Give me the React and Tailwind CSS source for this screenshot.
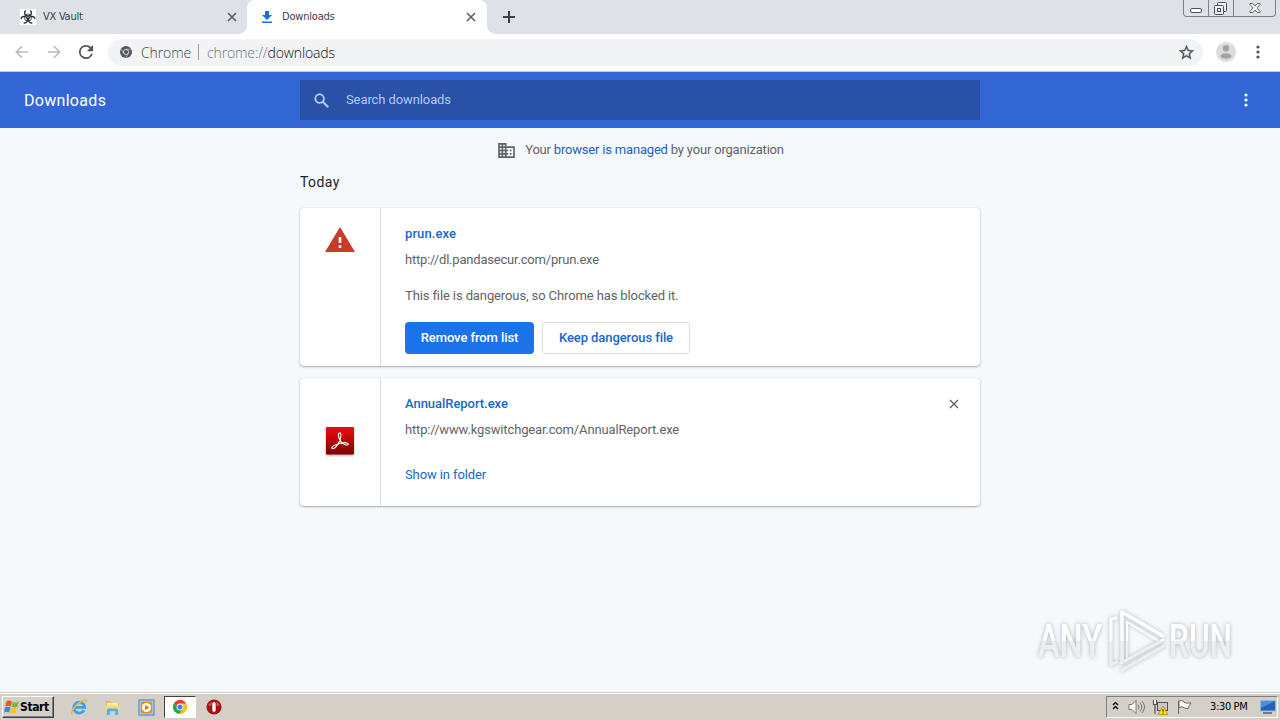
// App.jsx
import React from "react";

const TAB_FONT = "font-['DejaVu_Sans_Condensed','DejaVu_Sans',sans-serif]";

/* ================== ICONS ================== */
const CloseIcon = ({ className, width = 1.6 }) => (
  <svg viewBox="0 0 10 10" className={className} fill="none" stroke="currentColor" strokeWidth={width}>
    <path d="M1 1l8 8M9 1L1 9" />
  </svg>
);

const DotsIcon = ({ className }) => (
  <svg viewBox="0 0 4 14" className={className} fill="currentColor">
    <circle cx="2" cy="2" r="1.6" />
    <circle cx="2" cy="7" r="1.6" />
    <circle cx="2" cy="12" r="1.6" />
  </svg>
);

const BiohazardIcon = () => (
  <svg viewBox="0 0 16 16" className="w-4 h-4 bg-white" fill="none" stroke="#2b2b2b">
    <path d="M5.600 1.500C3.600 3.500 4.600 7 8 7s4.400-3.500 2.400-5.500" strokeWidth="1.400" />
    <path d="M1 9.800c.6-2.600 4.300-3.500 6-.6 1.700 3-.8 5.300-3.300 4.700" strokeWidth="1.400" />
    <path d="M15 9.800c-.6-2.600-4.300-3.500-6-.6-1.700 3 .8 5.300 3.300 4.700" strokeWidth="1.400" />
    <circle cx="8" cy="8.600" r="3.600" strokeWidth="0.800" />
    <circle cx="8" cy="8.400" r="1.500" fill="#2b2b2b" stroke="none" />
    <circle cx="8" cy="8.400" r="0.600" fill="#fff" stroke="none" />
  </svg>
);

const BackIcon = ({ className }) => (
  <svg viewBox="0 0 16 16" className={className} fill="none" stroke="#b9babc" strokeWidth="1.8">
    <path d="M15 8H2M8 1.5L1.5 8 8 14.5" />
  </svg>
);

const ReloadIcon = () => (
  <svg viewBox="4 4 16 16" className="w-[14px] h-[14px]" fill="#4f5256">
    <path d="M17.65 6.35A7.96 7.96 0 0 0 12 4a8 8 0 1 0 7.73 10h-2.08A6 6 0 1 1 12 6c1.66 0 3.14.69 4.22 1.78L13 11h7V4z" />
  </svg>
);

const ChromeMono = () => (
  <svg viewBox="0 0 24 24" className="w-3 h-3">
    <circle cx="12" cy="12" r="12" fill="#55585c" />
    <circle cx="12" cy="12" r="5.2" fill="#55585c" stroke="#f1f3f4" strokeWidth="1.5" />
    <path d="M12 6.5h11M7.2 14.8L2 6M16.8 14.8L11.5 24" stroke="#f1f3f4" strokeWidth="1" />
  </svg>
);

const StarIcon = () => (
  <svg viewBox="2 2 20 20" className="w-[15px] h-[15px]" fill="#4f5256" stroke="#4f5256" strokeWidth="0.4">
    <path d="M22 9.24l-7.19-.62L12 2 9.19 8.63 2 9.24l5.46 4.73L5.82 21 12 17.27 18.18 21l-1.63-7.03L22 9.24zM12 15.4l-3.76 2.27 1-4.28-3.32-2.88 4.38-.38L12 6.1l1.71 4.04 4.38.38-3.32 2.88 1 4.28L12 15.4z" />
  </svg>
);

const ChromeColor = () => (
  <svg viewBox="0 0 24 24" className="w-[14px] h-[14px]">
    <circle cx="12" cy="12" r="12" fill="#fbc11a" />
    <path d="M12 12L1.6 6A12 12 0 0 1 22.4 6z" fill="#e23c2e" />
    <path d="M1.6 6A12 12 0 0 0 11 24l6-9-5-3z" fill="#2ba24c" />
    <path d="M12 6h10.4A12 12 0 0 1 11 24l6-9z" fill="#fbc11a" />
    <circle cx="12" cy="12" r="5.8" fill="#fff" />
    <circle cx="12" cy="12" r="4.4" fill="#3f7fe8" />
  </svg>
);

const BusinessIcon = () => (
  <svg viewBox="2 3 20 18" className="w-[17px] h-[15px]" fill="#5f6368">
    <path d="M12 7V3H2v18h20V7H12zM6 19H4v-2h2v2zm0-4H4v-2h2v2zm0-4H4V9h2v2zm0-4H4V5h2v2zm4 12H8v-2h2v2zm0-4H8v-2h2v2zm0-4H8V9h2v2zm0-4H8V5h2v2zm10 12h-8v-2h2v-2h-2v-2h2v-2h-2V9h8v10zm-2-8h-2v2h2v-2zm0 4h-2v2h2v-2z" />
  </svg>
);

const WarningIcon = () => (
  <svg viewBox="0 0 30 25" className="w-[30px] h-[25px]">
    <path d="M15 0l15 25H0z" fill="#c93a28" />
    <path d="M13.700 10h2.600v6h-2.600zM13.700 18.300h2.600v2.700h-2.600z" fill="#fff" />
  </svg>
);

const PdfIcon = () => (
  <svg viewBox="0 0 30 30" className="w-[30px] h-[30px] drop-shadow-[0_1px_1px_rgba(0,0,0,0.35)]">
    <defs>
      <linearGradient id="pdf" x1="0" y1="0" x2="0" y2="1">
        <stop offset="0" stopColor="#f00b0b" />
        <stop offset="1" stopColor="#7d0303" />
      </linearGradient>
    </defs>
    <rect x="1" y="1" width="28" height="27.5" rx="1" fill="url(#pdf)" />
    <path
      d="M14.400 7c1.800-.6 2 2.700.8 6.200-1.500 4-4.500 9-7.200 9.500-2.300.2-1.500-2.200 2.300-3.800 4.200-1.700 9.700-3 12.200-1.600 1.600 1.100 0 2.300-2.300 1.400-3.200-1.300-5.700-4.200-6.500-7.500-.6-2.200-.3-3.900.7-4.200z"
      fill="none"
      stroke="#fff"
      strokeWidth="1.100"
    />
  </svg>
);

/* ================== BROWSER CHROME ================== */
const WindowButtons = () => (
  <div className="ml-auto mr-[4px] flex h-[17px] rounded-b-[4px] border border-t-0 border-[#7b8190] text-[#4b5060]">
    <div className="w-[25px] flex items-end justify-center border-r border-[#7b8190] pb-[3px]">
      <div className="w-3 h-[5px] rounded-[2px] border border-current bg-white" />
    </div>
    <div className="w-[25px] flex items-center justify-center border-r border-[#7b8190]">
      <svg viewBox="0 0 13 13" className="w-[13px] h-[13px] -ml-px" fill="#eceef1" stroke="currentColor">
        <rect x="3.500" y="0.500" width="9" height="9" rx="1" />
        <rect x="0.500" y="3.500" width="9" height="9" rx="1" />
        <rect x="3.500" y="6.500" width="3" height="3" />
      </svg>
    </div>
    <div className="w-[41px] flex items-center justify-center">
      <svg viewBox="0 0 13 11" className="w-[12px] h-[10px]" fill="#fff" stroke="currentColor">
        <path d="M1 .5h3l2.500 2.800L9 .5h3v1.200L8.500 5.500 12 9.300v1.200H9L6.500 7.700 4 10.500H1V9.300l3.500-3.800L1 1.700z" />
      </svg>
    </div>
  </div>
);

const TabStrip = () => (
  <div className={`h-[34px] flex bg-[#dee1e6] text-[11px] text-[#3c4043] ${TAB_FONT}`}>
    <div className="w-[247px] flex items-center pl-5 pr-[10px] rounded-br-lg bg-[#dee1e6]">
      <BiohazardIcon />
      <span className="ml-[7px] tracking-[-0.25px]">VX Vault</span>
      <CloseIcon className="ml-auto w-[10px] h-[10px] text-[#5a5d61]" />
    </div>
    <div className="relative w-[240px] flex items-center pl-[14px] pr-[11px] rounded-t-lg bg-white">
      {/* feet of the active tab */}
      <div className="absolute -left-2 bottom-0 w-2 h-2 bg-[radial-gradient(circle_at_0_0,#dee1e6_7.500px,#fff_8px)]" />
      <div className="absolute -right-2 bottom-0 w-2 h-2 bg-[radial-gradient(circle_at_100%_0,#dee1e6_7.500px,#fff_8px)]" />
      <svg viewBox="0 0 12 12" className="w-3 h-3" fill="#1a6fd8">
        <path d="M4 0h4v4h3L6 9 1 4h3zM1 10.500h10V12H1z" />
      </svg>
      <span className="ml-[9px] tracking-[-0.2px]">Downloads</span>
      <CloseIcon className="ml-auto w-[10px] h-[10px] text-[#5a5d61]" />
    </div>
    <svg viewBox="0 0 12 12" className="ml-4 mt-[11px] w-3 h-3" stroke="#3c4043" strokeWidth="2">
      <path d="M6 0v12M0 6h12" />
    </svg>
    <WindowButtons />
  </div>
);

const Toolbar = () => (
  <div className="h-[38px] flex items-center pl-[15px] pb-px bg-white border-b border-[#c3cbe0]">
    <BackIcon className="w-[14px] h-[14px]" />
    <BackIcon className="ml-[18px] w-[14px] h-[14px] rotate-180" />
    <div className="ml-[18px]">
      <ReloadIcon />
    </div>
    <div className="ml-[15px] w-[1095px] h-[27px] flex items-center rounded-full bg-[#f1f3f4] pl-3 pr-[9px] font-['Open_Sans',sans-serif] font-light text-[14px] text-[#43464a]">
      <ChromeMono />
      <span className="ml-[9px] w-[50px] whitespace-nowrap tracking-[-0.1px]">Chrome</span>
      <div className="ml-[7px] mr-2 w-px h-4 bg-[#9a9da1]" />
      <span className="text-[#74797f] tracking-[-0.12px]">
        chrome://<span className="text-[#101114]">downloads</span>
      </span>
      <div className="ml-auto">
        <StarIcon />
      </div>
    </div>
    <svg viewBox="0 0 20 20" className="ml-[13px] w-5 h-5">
      <circle cx="10" cy="10" r="10" fill="#dcdcdc" />
      <circle cx="10" cy="6.300" r="3.200" fill="#a3a3a3" />
      <ellipse cx="10" cy="14" rx="5.500" ry="2.800" fill="#a3a3a3" />
    </svg>
    <DotsIcon className="ml-[20px] w-[4px] h-[14px] text-[#4f5256]" />
  </div>
);

/* ================== DOWNLOADS PAGE ================== */
const Header = () => (
  <div className="h-14 flex items-center bg-[#3367d6] text-white">
    <h1 className="w-[300px] pl-6 pt-[2px] text-[16px] tracking-[0.3px]">Downloads</h1>
    <div className="w-[680px] h-10 flex items-center bg-[#2951a8] pl-[14px]">
      <svg viewBox="0 0 15 15" className="w-[15px] h-[15px]" fill="none" stroke="#b5c8f0" strokeWidth="1.900">
        <circle cx="5.600" cy="5.600" r="4.300" />
        <path d="M8.800 8.800l5.400 5.400" strokeWidth="2.200" />
      </svg>
      <span className="ml-[17px] text-[13px] tracking-[-0.1px] text-[#b5c8f0]">Search downloads</span>
    </div>
    <DotsIcon className="ml-[264px] w-[4px] h-[14px]" />
  </div>
);

const Card = ({ icon, children, className }) => (
  <div className={`flex rounded-[4px] bg-white shadow-[0_1px_2px_rgba(60,64,67,0.4),0_0_1px_rgba(60,64,67,0.3)] ${className}`}>
    <div className="w-[81px] flex justify-center border-r border-[#dadce0]">{icon}</div>
    <div className="flex-1 pl-6 pr-[21px] pt-[17px]">{children}</div>
  </div>
);

const DownloadsPage = () => (
  <main className="flex-1 bg-[#f5f9fc] text-[13px] text-[#5f6368]">
    <div className="h-[44px] flex justify-center items-center pl-[2px]">
      <BusinessIcon />
      <span className="ml-[10px] tracking-[-0.19px]">
        Your <span className="text-[#2a5db8]">browser is managed</span> by your organization
      </span>
    </div>
    <div className="w-[680px] mx-auto">
      <h2 className="h-9 text-[14px] leading-5 tracking-[0.4px] text-[#202124]">Today</h2>

      <Card
        className="h-[158px]"
        icon={
          <div className="pt-[19px]">
            <WarningIcon />
          </div>
        }
      >
        <div className="leading-[18px] font-medium text-[#1967c8] tracking-[0.1px]">prun.exe</div>
        <div className="mt-2 leading-[18px] tracking-[-0.2px]">http://dl.pandasecur.com/prun.exe</div>
        <div className="mt-[18px] leading-[18px] tracking-[-0.11px]">This file is dangerous, so Chrome has blocked it.</div>
        <div className="mt-[17px] flex gap-2 font-medium tracking-[-0.08px]">
          <button className="w-[129px] h-8 rounded-[4px] bg-[#1a73e8] text-white">Remove from list</button>
          <button className="w-[148px] h-8 rounded-[4px] border border-[#dadce0] text-[#1967c8]">
            Keep dangerous file
          </button>
        </div>
      </Card>

      <Card
        className="mt-3 h-[128px]"
        icon={
          <div className="pt-12">
            <PdfIcon />
          </div>
        }
      >
        <div className="flex items-center justify-between leading-[18px] font-medium text-[#1967c8] tracking-[-0.04px]">
          AnnualReport.exe
          <CloseIcon className="w-[10px] h-[10px] text-[#5f6368]" width={1.4} />
        </div>
        <div className="mt-2 leading-[18px] tracking-[-0.15px]">http://www.kgswitchgear.com/AnnualReport.exe</div>
        <div className="mt-[27px] leading-[18px] text-[#1967c8] tracking-[-0.1px]">Show in folder</div>
      </Card>
    </div>
  </main>
);

const Watermark = () => (
  <svg
    viewBox="0 0 220 72"
    className="absolute left-[1030px] top-[604px] w-[220px] h-[72px] drop-shadow-[0_0_2px_rgba(0,0,0,0.28)]"
  >
    <defs>
      <linearGradient id="fade" x1="0" y1="0" x2="0" y2="72" gradientUnits="userSpaceOnUse">
        <stop offset="0.5" stopColor="#fff" />
        <stop offset="0.52" stopColor="#eceeef" />
      </linearGradient>
    </defs>
    <g fill="url(#fade)" fontFamily="Roboto, sans-serif" fontSize="46" fontWeight="500">
      <text x="8" y="53" textLength="64" lengthAdjust="spacingAndGlyphs">ANY</text>
      <text x="139" y="53" textLength="63" lengthAdjust="spacingAndGlyphs">RUN</text>
    </g>
    <g fill="none" stroke="url(#fade)" strokeWidth="3" strokeLinecap="round" strokeLinejoin="round">
      <path d="M86 14l-5 1v46l6-3" />
      <path d="M92 57V8l41 24" strokeWidth="3.500" />
      <path d="M97 18l30 18M97 18v36" strokeWidth="2" />
      <path d="M91 59l42-23" />
      <path d="M92 66l42-24" />
    </g>
  </svg>
);

/* ================== TASKBAR ================== */
const WindowsFlag = () => (
  <svg viewBox="0 0 16 16" className="w-4 h-4">
    <path d="M2.500 2.500C4.500 1.200 6.300 1.500 8 2.400L6.700 7.500C5 6.500 3.200 6.500 1.200 7.500z" fill="#e8562a" />
    <path d="M8.800 2.800c2 1 4 1 6.200-.3l-1.400 5c-2 1.300-4 1.200-6.100.2z" fill="#7eb83a" />
    <path d="M1 8.400c2-1 3.800-1 5.500 0l-1.300 5c-1.800-1-3.500-1-5.200 0z" fill="#3f87d9" />
    <path d="M7.200 8.800c2 1 4 1 6.200-.2l-1.400 5c-2 1.300-4 1.200-6.100.2z" fill="#f7c22c" />
  </svg>
);

const Taskbar = () => (
  <footer className="h-[28px] flex items-center bg-[#d4d0c8] border-t border-[#d4d0c8] shadow-[inset_0_1px_0_#fff] pt-[1px]">
    <div className="ml-[2px] w-[52px] h-[22px] flex items-center border border-white border-r-[#404040] border-b-[#404040] shadow-[inset_-1px_-1px_0_#808080] pl-[1px]">
      <WindowsFlag />
      <span className={`text-[12px] font-bold text-black tracking-[-0.4px] ${TAB_FONT}`}>Start</span>
    </div>

    <svg viewBox="0 0 18 18" className="ml-[16px] w-[18px] h-[18px]" fill="none">
      <path d="M14 12.300a5.500 5.500 0 1 1 .7-3H5" stroke="#3ba0e6" strokeWidth="2.800" />
      <path d="M2.500 16.500C-.5 14 6 6 12 3c4-2 5-1 4.300 1.200" stroke="#efba36" strokeWidth="1.500" />
    </svg>
    <svg viewBox="0 0 18 18" className="ml-[16px] w-[17px] h-[17px]">
      <path d="M2 2h6l1 2h7v6H2z" fill="#e0b64d" />
      <path d="M3 4h12v6H3z" fill="#fbeeaa" />
      <path d="M1 7h16v6H1z" fill="#f3d97c" />
      <path d="M3 17v-5q0-2 2-2h8q2 0 2 2v5h-3v-4H6v4z" fill="#58aee2" />
    </svg>
    <svg viewBox="0 0 18 18" className="ml-[17px] w-[17px] h-[17px]">
      <rect x="1" y="1" width="16" height="16" fill="#9dc9ee" stroke="#4785bd" />
      <rect x="3" y="3" width="12" height="12" rx="2" fill="#f28a1e" />
      <circle cx="9" cy="9" r="4.800" fill="#fff" />
      <path d="M7.500 6L12 9l-4.500 3z" fill="#e8720c" />
    </svg>
    <div className="ml-[9px] w-[32px] h-[22px] flex items-center justify-center bg-white border border-[#404040] border-r-white border-b-white">
      <ChromeColor />
    </div>
    <svg viewBox="0 0 16 16" className="ml-[10px] w-4 h-4">
      <circle cx="8" cy="8" r="7.600" fill="#a91217" />
      <path d="M2 6a6.500 5 0 0 1 12 0q-6 3-12 0z" fill="#d9484b" />
      <rect x="6" y="2.800" width="4" height="10.400" rx="2" fill="#fff" stroke="#6d090c" strokeWidth="0.600" />
    </svg>

    <div className="ml-auto mr-[2px] w-[172px] h-[22px] flex items-center border border-[#808080] border-r-white border-b-white pl-[5px]">
      <svg viewBox="0 0 7 9" className="mb-1 w-[7px] h-[9px]" fill="none" stroke="#000" strokeWidth="1.300">
        <path d="M1 4l2.500-2.500L6 4M1 8l2.500-2.500L6 8" />
      </svg>
      <svg viewBox="0 0 17 16" className="ml-[9px] w-[17px] h-4" fill="none" stroke="#77787a">
        <path d="M1 5.500h3l4-4v13l-4-4H1z" fill="#fff" />
        <path d="M10 5.500q2 2.500 0 5M12 3.500q3.500 4.500 0 9M14 2q5 6 0 12" />
      </svg>
      <svg viewBox="0 0 17 16" className="ml-[7px] w-[17px] h-4">
        <rect x="5.500" y="3.500" width="10" height="8" fill="#c8c8c8" stroke="#555" />
        <path d="M1.500 1v4.500h3V1M3 5v10M6 14.500h5" fill="#fff" stroke="#555" strokeWidth="1.200" />
        <path d="M11 7l5 8.500H6z" fill="#ffdf28" stroke="#a88200" strokeWidth="0.700" />
        <path d="M11 10v2.800M11 13.500v1" stroke="#222" />
      </svg>
      <svg viewBox="0 0 17 16" className="ml-[7px] w-[17px] h-4" fill="#fff" stroke="#68696b">
        <path d="M2.500 15V1.500M3 2q3-1 5 .5v1q3 1 7 .5-2 2.500-3 5.500-3 .5-5-1.500-2-.5-4 .5z" />
      </svg>
      <span className={`ml-[17px] w-[42px] whitespace-nowrap text-[11px] text-black tracking-[-0.350px] ${TAB_FONT}`}>
        3:30 PM
      </span>
      <svg viewBox="0 0 16 14" className="ml-[8px] w-4 h-[14px]">
        <rect x="0.500" y="0.500" width="15" height="10.500" fill="#2563b8" stroke="#94b8df" />
        <path d="M1 1h14L1 8z" fill="#4a91dc" />
        <path d="M3 13h9" stroke="#55606c" strokeWidth="1.500" />
      </svg>
    </div>
  </footer>
);

export default function App() {
  return (
    <div className="relative w-[1280px] h-[720px] flex flex-col overflow-hidden font-['Roboto',sans-serif]">
      <TabStrip />
      <Toolbar />
      <Header />
      <DownloadsPage />
      <Taskbar />
      <Watermark />
    </div>
  );
}
